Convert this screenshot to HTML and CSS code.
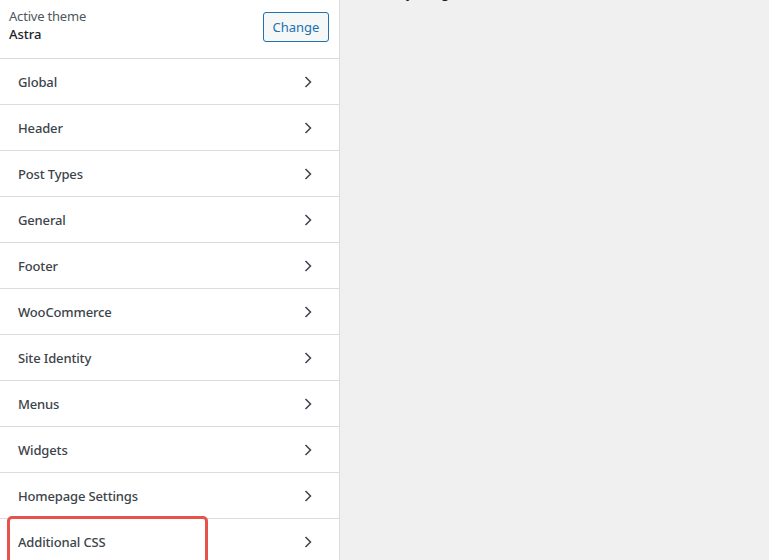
FILE: index.html
```html
<!DOCTYPE html>
<html>
<head>
<meta charset="utf-8">
<link rel="stylesheet" href="styles.css">
</head>
<body>
<div class="app">
  <aside class="sidebar">
    <div class="theme">
      <div class="theme-info">
        <div class="theme-label">Active theme</div>
        <div class="theme-name">Astra</div>
      </div>
      <button class="btn">Change</button>
    </div>
    <ul class="menu">
      <li class="item"><span>Global</span><svg class="chev" viewBox="0 0 10 14"><path d="M2.5 2 L7.5 7 L2.5 12" /></svg></li>
      <li class="item"><span>Header</span><svg class="chev" viewBox="0 0 10 14"><path d="M2.5 2 L7.5 7 L2.5 12" /></svg></li>
      <li class="item"><span>Post Types</span><svg class="chev" viewBox="0 0 10 14"><path d="M2.5 2 L7.5 7 L2.5 12" /></svg></li>
      <li class="item"><span>General</span><svg class="chev" viewBox="0 0 10 14"><path d="M2.5 2 L7.5 7 L2.5 12" /></svg></li>
      <li class="item"><span>Footer</span><svg class="chev" viewBox="0 0 10 14"><path d="M2.5 2 L7.5 7 L2.5 12" /></svg></li>
      <li class="item"><span>WooCommerce</span><svg class="chev" viewBox="0 0 10 14"><path d="M2.5 2 L7.5 7 L2.5 12" /></svg></li>
      <li class="item"><span>Site Identity</span><svg class="chev" viewBox="0 0 10 14"><path d="M2.5 2 L7.5 7 L2.5 12" /></svg></li>
      <li class="item"><span>Menus</span><svg class="chev" viewBox="0 0 10 14"><path d="M2.5 2 L7.5 7 L2.5 12" /></svg></li>
      <li class="item"><span>Widgets</span><svg class="chev" viewBox="0 0 10 14"><path d="M2.5 2 L7.5 7 L2.5 12" /></svg></li>
      <li class="item"><span>Homepage Settings</span><svg class="chev" viewBox="0 0 10 14"><path d="M2.5 2 L7.5 7 L2.5 12" /></svg></li>
      <li class="item highlighted"><span>Additional CSS</span><svg class="chev" viewBox="0 0 10 14"><path d="M2.5 2 L7.5 7 L2.5 12" /></svg><div class="mark"></div></li>
    </ul>
  </aside>
  <main class="preview">
    <p class="cut">hey tong he, the last unit to then, an, then, wide, and more</p>
  </main>
</div>
</body>
</html>
```
FILE: styles.css
```css
* { box-sizing: border-box; }
html, body { margin: 0; padding: 0; height: 100%; overflow: hidden; }
body { font-family: "Noto Sans", "Open Sans", sans-serif; background: #f0f0f1; }
.app { display: flex; height: 560px; }
.sidebar { width: 340px; flex: none; background: #fff; border-right: 1px solid #dcdcde; }
.theme { height: 59px; display: flex; align-items: flex-start; justify-content: space-between; padding: 7px 10px 0 9px; border-bottom: 1px solid #dcdcde; }
.theme-label { font-size: 13px; color: #50575e; line-height: 18px; letter-spacing: -0.2px; }
.theme-name { font-size: 13px; color: #1d2327; line-height: 18px; font-weight: 500; }
.btn { margin-top: 5px; height: 30px; width: 66px; padding: 0; font-family: inherit; font-size: 13px; color: #2271b1; background: #f6f7f7; border: 1px solid #2271b1; border-radius: 3px; }
.menu { list-style: none; margin: 0; padding: 0; }
.item { position: relative; height: 46px; display: flex; align-items: center; justify-content: space-between; padding: 0 26px 0 18px; border-bottom: 1px solid #dcdcde; font-size: 13px; font-weight: 500; letter-spacing: -0.15px; color: #3c434a; }
.chev { width: 10px; height: 14px; fill: none; stroke: #3c434a; stroke-width: 1.5; }
.mark { position: absolute; left: 7px; top: -3px; width: 201px; height: 49px; border: 3px solid #e5534b; border-radius: 5px; }
.preview { flex: 1; overflow: hidden; }
.cut { margin: -15.6px 0 0 48px; font-family: "Liberation Sans", sans-serif; font-size: 16px; line-height: 18px; color: #1d2327; white-space: nowrap; }
```
